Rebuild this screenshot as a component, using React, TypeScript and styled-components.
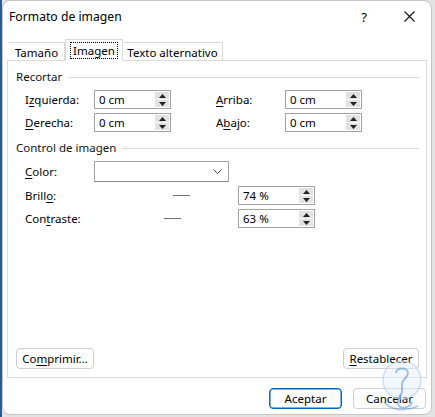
import styled, { createGlobalStyle } from "styled-components";

const GlobalStyle = createGlobalStyle`
  html, body {
    margin: 0;
    padding: 0;
  }
  body {
    font-family: "Noto Sans", "Liberation Sans", sans-serif;
    color: #000;
  }
`;

const Backdrop = styled.div`
  width: 435px;
  height: 417px;
  background: linear-gradient(to right, #2d5c88 0 2px, #e3e3e3 2px);
  position: relative;
  overflow: hidden;
`;

const Dialog = styled.div`
  position: absolute;
  left: 2px;
  top: 0;
  width: 430px;
  height: 415px;
  box-sizing: border-box;
  background: #fff;
  border: 1px solid #c4c4c4;
  border-radius: 8px;
  display: flex;
  flex-direction: column;
`;

const TitleBar = styled.div`
  height: 31px;
  display: flex;
  align-items: center;
  padding-left: 6px;
  font-size: 12.2px;
  color: #000;
`;

const Title = styled.div`
  flex: 1;
`;

const TitleButton = styled.div<{ $w: number }>`
  width: ${({ $w }) => $w}px;
  height: 31px;
  display: flex;
  align-items: center;
  justify-content: center;
  font-size: 13px;
`;

const TabStrip = styled.div`
  display: flex;
  align-items: flex-end;
  padding-left: 6px;
  margin-top: 6px;
  height: 22px;
  position: relative;
  z-index: 1;
`;

const Tab = styled.div<{ $w: number; $active?: boolean }>`
  width: ${({ $w }) => $w}px;
  height: ${({ $active }) => ($active ? 22 : 18)}px;
  box-sizing: border-box;
  border: 1px solid #dadada;
  border-bottom: ${({ $active }) => ($active ? "1px solid #fff" : "none")};
  border-left: ${({ $active }) => ($active ? "1px solid #dadada" : "none")};
  background: #fff;
  display: flex;
  align-items: center;
  justify-content: center;
  font-size: 11.5px;
  padding-top: ${({ $active }) => ($active ? 0 : 2)}px;
  margin-bottom: ${({ $active }) => ($active ? -1 : 0)}px;
`;

const FocusText = styled.span`
  outline: 1px dotted #000;
  outline-offset: 1px;
  padding: 0 1px;
  line-height: 13px;
`;

const Panel = styled.div`
  margin-left: 4px;
  width: 420px;
  height: 318px;
  box-sizing: border-box;
  border: 1px solid #dadada;
  display: flex;
  flex-direction: column;
  padding: 8px 7px 8px 8px;
`;

const GroupHeader = styled.div<{ $mt: number }>`
  display: flex;
  align-items: center;
  gap: 6px;
  margin-top: ${({ $mt }) => $mt}px;
  font-size: 11.5px;
  line-height: 16px;
  color: #111;
  &::after {
    content: "";
    flex: 1;
    height: 1px;
    background: #dcdcdc;
  }
`;

const FieldGrid = styled.div<{ $cols: string }>`
  display: grid;
  grid-template-columns: ${({ $cols }) => $cols};
  row-gap: 4px;
  margin-top: 5px;
  padding-left: 9px;
  align-items: center;
`;

const Label = styled.div`
  font-size: 11.5px;
  line-height: 16px;
  u {
    text-decoration-thickness: 1px;
    text-underline-offset: 2px;
  }
`;

const Spin = styled.div`
  height: 19px;
  box-sizing: border-box;
  border: 1px solid #a2a2a2;
  background: #fff;
  display: flex;
  align-items: center;
  padding: 1px 1px 1px 4px;
  font-size: 11.5px;
`;

const SpinValue = styled.div`
  flex: 1;
`;

const SpinButtons = styled.div`
  width: 14px;
  height: 15px;
  display: flex;
  flex-direction: column;
  gap: 1px;
`;

const SpinHalf = styled.div`
  flex: 1;
  background: #e2e2e2;
  display: flex;
  align-items: center;
  justify-content: center;
`;

const Select = styled.div`
  height: 21px;
  width: 135px;
  box-sizing: border-box;
  border: 1px solid #a2a2a2;
  border-bottom-color: #8a8a8a;
  display: flex;
  align-items: center;
  justify-content: flex-end;
  padding-right: 6px;
`;

const SliderArea = styled.div`
  display: flex;
  align-items: center;
  height: 19px;
`;

const Dash = styled.div<{ $offset: number }>`
  width: 17px;
  height: 1.5px;
  background: #6f6f6f;
  margin-left: ${({ $offset }) => $offset}px;
`;

const Spacer = styled.div`
  flex: 1;
`;

const ButtonRow = styled.div`
  display: flex;
  justify-content: space-between;
`;

const Button = styled.div<{ $primary?: boolean; $w: number }>`
  width: ${({ $w }) => $w}px;
  height: 21px;
  box-sizing: border-box;
  border: 1px solid ${({ $primary }) => ($primary ? "#0067c0" : "#d0d0d0")};
  box-shadow: ${({ $primary }) => ($primary ? "inset 0 0 0 0.5px #0067c0" : "none")};
  border-radius: 4px;
  background: #fdfdfd;
  display: flex;
  align-items: center;
  justify-content: center;
  font-size: 11.5px;
  u {
    text-decoration-thickness: 1px;
    text-underline-offset: 2px;
  }
`;

const Footer = styled.div`
  display: flex;
  justify-content: flex-end;
  gap: 11px;
  margin-top: 10px;
  padding-right: 5px;
`;

const Watermark = styled.svg`
  position: absolute;
  left: 372px;
  top: 358px;
  width: 56px;
  height: 59px;
  pointer-events: none;
`;

const Up = () => (
  <svg width="7" height="4" viewBox="0 0 7 4">
    <polygon points="3.5,0 7,4 0,4" fill="#222" />
  </svg>
);

const Down = () => (
  <svg width="7" height="4" viewBox="0 0 7 4">
    <polygon points="0,0 7,0 3.5,4" fill="#222" />
  </svg>
);

const SpinBox = ({ value }: { value: string }) => (
  <Spin>
    <SpinValue>{value}</SpinValue>
    <SpinButtons>
      <SpinHalf>
        <Up />
      </SpinHalf>
      <SpinHalf>
        <Down />
      </SpinHalf>
    </SpinButtons>
  </Spin>
);

const App = () => {
  return (
    <>
      <GlobalStyle />
      <Backdrop>
        <Dialog>
          <TitleBar>
            <Title>Formato de imagen</Title>
            <TitleButton $w={46}>?</TitleButton>
            <TitleButton $w={44}>
              <svg width="11" height="11" viewBox="0 0 11 11">
                <path d="M0.5 0.5 L10.5 10.5 M10.5 0.5 L0.5 10.5" stroke="#111" strokeWidth="1.1" />
              </svg>
            </TitleButton>
          </TitleBar>

          <TabStrip>
            <Tab $w={56}>Tamaño</Tab>
            <Tab $w={58} $active>
              <FocusText>Imagen</FocusText>
            </Tab>
            <Tab $w={100}>Texto alternativo</Tab>
          </TabStrip>

          <Panel>
            <GroupHeader $mt={0}>Recortar</GroupHeader>
            <FieldGrid $cols="69px 77px 45px 69px 77px">
              <Label>
                I<u>z</u>quierda:
              </Label>
              <SpinBox value="0 cm" />
              <div />
              <Label>
                <u>A</u>rriba:
              </Label>
              <SpinBox value="0 cm" />

              <Label>
                <u>D</u>erecha:
              </Label>
              <SpinBox value="0 cm" />
              <div />
              <Label>
                A<u>b</u>ajo:
              </Label>
              <SpinBox value="0 cm" />
            </FieldGrid>

            <GroupHeader $mt={8}>Control de imagen</GroupHeader>
            <FieldGrid $cols="69px 144px 77px">
              <Label>
                <u>C</u>olor:
              </Label>
              <Select>
                <svg width="9" height="5" viewBox="0 0 9 5">
                  <polyline points="0.5,0.5 4.5,4.5 8.5,0.5" fill="none" stroke="#444" strokeWidth="1" />
                </svg>
              </Select>
              <div />

              <Label>
                Brill<u>o</u>:
              </Label>
              <SliderArea>
                <Dash $offset={79} />
              </SliderArea>
              <SpinBox value="74 %" />

              <Label>
                Con<u>t</u>raste:
              </Label>
              <SliderArea>
                <Dash $offset={70} />
              </SliderArea>
              <SpinBox value="63 %" />
            </FieldGrid>

            <Spacer />
            <ButtonRow>
              <Button $w={78}>
                Co<u>m</u>primir...
              </Button>
              <Button $w={76}>
                <u>R</u>establecer
              </Button>
            </ButtonRow>
          </Panel>

          <Footer>
            <Button $w={73} $primary>
              Aceptar
            </Button>
            <Button $w={73}>Cancelar</Button>
          </Footer>
        </Dialog>

        <Watermark viewBox="0 0 56 59">
          <circle cx="30" cy="22" r="19" fill="rgba(225,238,248,0.45)" stroke="rgba(170,200,228,0.5)" strokeWidth="1.5" />
          <path
            d="M24 15 C24 9 36 9 36 15 C36 20 30 21 30 26 L30 33 C30 38 24 40 26 46 C28 52 38 50 40 44"
            fill="none"
            stroke="rgba(80,140,205,0.55)"
            strokeWidth="1.8"
          />
          <path d="M12 44 C18 52 32 54 46 48" fill="none" stroke="rgba(80,140,205,0.45)" strokeWidth="1.8" />
        </Watermark>
      </Backdrop>
    </>
  );
};

export default App;
